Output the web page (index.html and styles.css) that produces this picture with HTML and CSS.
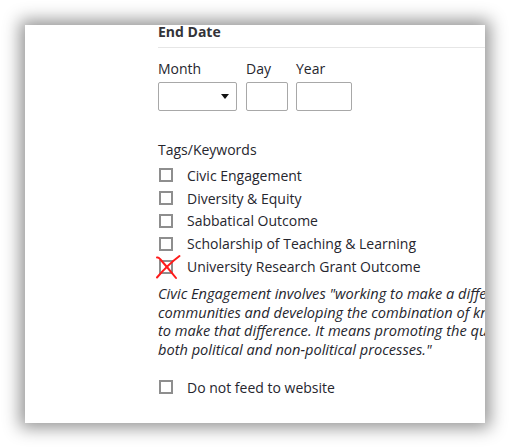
FILE: index.html
```html
<!DOCTYPE html>
<html>
<head>
<meta charset="utf-8">
<link rel="stylesheet" href="styles.css">
</head>
<body>
<div class="page">
  <div class="card">
    <div class="form">
      <div class="section-title">End Date</div>
      <div class="date-row">
        <div class="field field-month">
          <label class="field-label">Month</label>
          <div class="select"><span class="caret"></span></div>
        </div>
        <div class="field field-day">
          <label class="field-label">Day</label>
          <div class="input input-day"></div>
        </div>
        <div class="field">
          <label class="field-label">Year</label>
          <div class="input input-year"></div>
        </div>
      </div>

      <div class="tags-label">Tags/Keywords</div>
      <ul class="checks">
        <li class="check"><span class="box"></span><span class="check-text">Civic Engagement</span></li>
        <li class="check"><span class="box"></span><span class="check-text">Diversity &amp; Equity</span></li>
        <li class="check"><span class="box"></span><span class="check-text">Sabbatical Outcome</span></li>
        <li class="check"><span class="box"></span><span class="check-text">Scholarship of Teaching &amp; Learning</span></li>
        <li class="check"><span class="box marked"><svg class="red-x" width="35" height="32" viewBox="0 0 35 32"><path d="M7 6.5 Q8.5 6 10 8 Q18 17 26 27" fill="none" stroke="#ff1a1a" stroke-width="2" stroke-linecap="round"/><path d="M29.5 5 Q18 13.5 7 26.5" fill="none" stroke="#ff1a1a" stroke-width="2" stroke-linecap="round"/></svg></span><span class="check-text">University Research Grant Outcome</span></li>
      </ul>

      <p class="help">Civic Engagement involves "working to make a difference in the civic life of our<br>communities and developing the combination of knowledge, skills, values and motivation<br>to make that difference. It means promoting the quality of life in a community, through<br>both political and non-political processes."</p>

      <ul class="checks feed">
        <li class="check"><span class="box"></span><span class="check-text">Do not feed to website</span></li>
      </ul>
    </div>
  </div>
</div>
</body>
</html>
```

FILE: styles.css
```css
html, body {
  margin: 0;
  padding: 0;
  background: #ffffff;
}

.page {
  padding: 25px;
  width: 460px;
  height: 398px;
}

.card {
  width: 460px;
  height: 398px;
  background: #ffffff;
  overflow: hidden;
  box-shadow: 0 0 16px 5px rgba(0, 0, 0, 0.42);
}

.form {
  padding-left: 133px;
  font-family: "Open Sans", "Noto Sans", sans-serif;
  font-size: 14px;
  color: #26262e;
}

.section-title {
  font-weight: 700;
  line-height: 14px;
  padding-bottom: 8px;
  border-bottom: 1px solid #e6e6e6;
  color: #333338;
}

.date-row {
  display: flex;
  margin-top: 11px;
}

.field {
  display: flex;
  flex-direction: column;
  gap: 4px;
}

.field-month { margin-right: 9px; }
.field-day { margin-right: 8px; }

.field-label {
  line-height: 19px;
}

.select {
  width: 79px;
  height: 29px;
  border: 1px solid #a8a8a8;
  border-radius: 2px;
  display: flex;
  align-items: center;
  justify-content: flex-end;
  padding-right: 7px;
  box-sizing: border-box;
}

.caret {
  width: 0;
  height: 0;
  border-left: 4.5px solid transparent;
  border-right: 4.5px solid transparent;
  border-top: 5px solid #111;
}

.input {
  height: 29px;
  border: 1px solid #a8a8a8;
  border-radius: 2px;
  box-sizing: border-box;
}

.input-day { width: 42px; }
.input-year { width: 56px; }

.tags-label {
  margin-top: 29px;
  line-height: 19px;
}

.checks {
  list-style: none;
  margin: 5px 0 0 0;
  padding: 0;
}

.check {
  display: flex;
  align-items: center;
  height: 22.8px;
}

.box {
  position: relative;
  width: 14px;
  height: 14px;
  box-sizing: border-box;
  border: 2px solid #8e8e8e;
  margin-left: 1px;
  margin-right: 14px;
  flex: none;
}

.red-x {
  position: absolute;
  left: -11px;
  top: -11px;
}

.check-text {
  line-height: 19px;
  white-space: nowrap;
}

.help {
  margin: 6px 0 0 0;
  font-style: italic;
  font-size: 14.6px;
  line-height: 18.67px;
  white-space: nowrap;
  color: #26262e;
}

.checks.feed {
  margin-top: 17px;
}
```
